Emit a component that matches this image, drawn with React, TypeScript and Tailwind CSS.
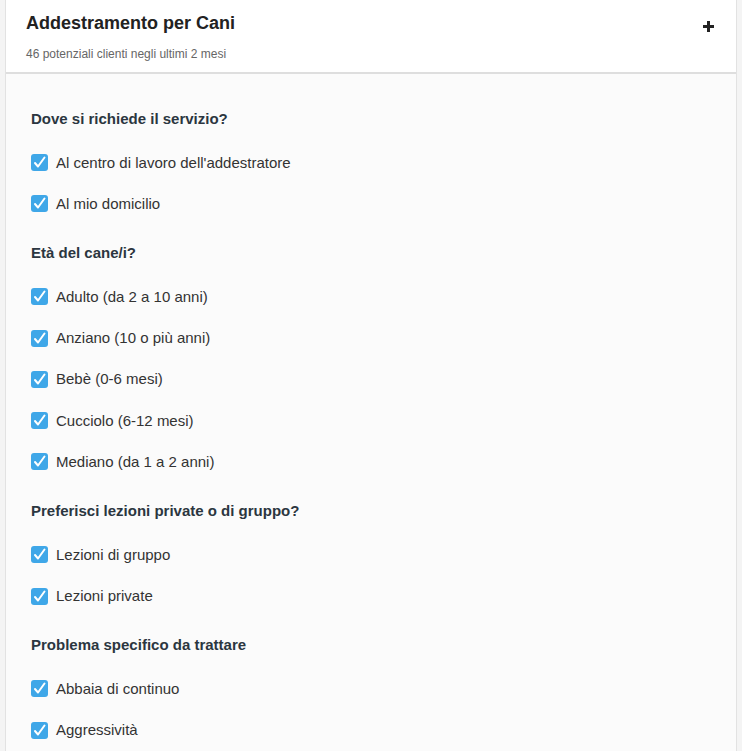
import React from "react"

type Section = {
    title: string
    options: string[]
}

const sections: Section[] = [
    {
        title: "Dove si richiede il servizio?",
        options: ["Al centro di lavoro dell'addestratore", "Al mio domicilio"]
    },
    {
        title: "Età del cane/i?",
        options: [
            "Adulto (da 2 a 10 anni)",
            "Anziano (10 o più anni)",
            "Bebè (0-6 mesi)",
            "Cucciolo (6-12 mesi)",
            "Mediano (da 1 a 2 anni)"
        ]
    },
    {
        title: "Preferisci lezioni private o di gruppo?",
        options: ["Lezioni di gruppo", "Lezioni private"]
    },
    {
        title: "Problema specifico da trattare",
        options: ["Abbaia di continuo", "Aggressività"]
    }
]

function CheckBox() {
    return (
        <span className="flex h-[17px] w-[17px] shrink-0 items-center justify-center rounded-[3px] bg-[#3fa7e8]">
            <svg width="13" height="13" viewBox="0 0 13 13" fill="none">
                <path
                    d="M2 7 L5 10.5 L11.5 1.5"
                    stroke="white"
                    strokeWidth="2"
                    strokeLinecap="round"
                    strokeLinejoin="round"
                />
            </svg>
        </span>
    )
}

export default function App() {
    return (
        <div className="min-h-[751px] bg-[#f4f4f4] px-[5px] font-['Liberation_Sans',Arial,sans-serif]">
            <div className="border-x border-[#e2e2e2]">
                <div className="flex h-[74px] justify-between border-b-2 border-[#dedede] bg-white pl-[20px] pr-[22px]">
                    <div>
                        <h1 className="mt-[12px] text-[18px] font-bold leading-[22px] text-[#222]">
                            Addestramento per Cani
                        </h1>
                        <p className="mt-[13px] text-[12px] leading-[14px] text-[#666]">
                            46 potenziali clienti negli ultimi 2 mesi
                        </p>
                    </div>
                    <svg className="mt-[21px]" width="11" height="11" viewBox="0 0 11 11">
                        <rect x="4" y="0" width="3" height="11" fill="#222" />
                        <rect x="0" y="4" width="11" height="3" fill="#222" />
                    </svg>
                </div>

                <div className="bg-[#fbfbfb] pl-[25px] pt-[35px] pb-[20px]">
                    {sections.map((s, i) => (
                        <div key={s.title} className={i > 0 ? "mt-[18.5px]" : ""}>
                            <h2 className="mb-[13px] text-[15px] font-bold leading-[20px] text-[#2b3640]">
                                {s.title}
                            </h2>
                            {s.options.map((o) => (
                                <label key={o} className="flex h-[41.3px] items-center gap-[8px]">
                                    <CheckBox />
                                    <span className="text-[15px] leading-[20px] text-[#333]">{o}</span>
                                </label>
                            ))}
                        </div>
                    ))}
                </div>
            </div>
        </div>
    )
}
